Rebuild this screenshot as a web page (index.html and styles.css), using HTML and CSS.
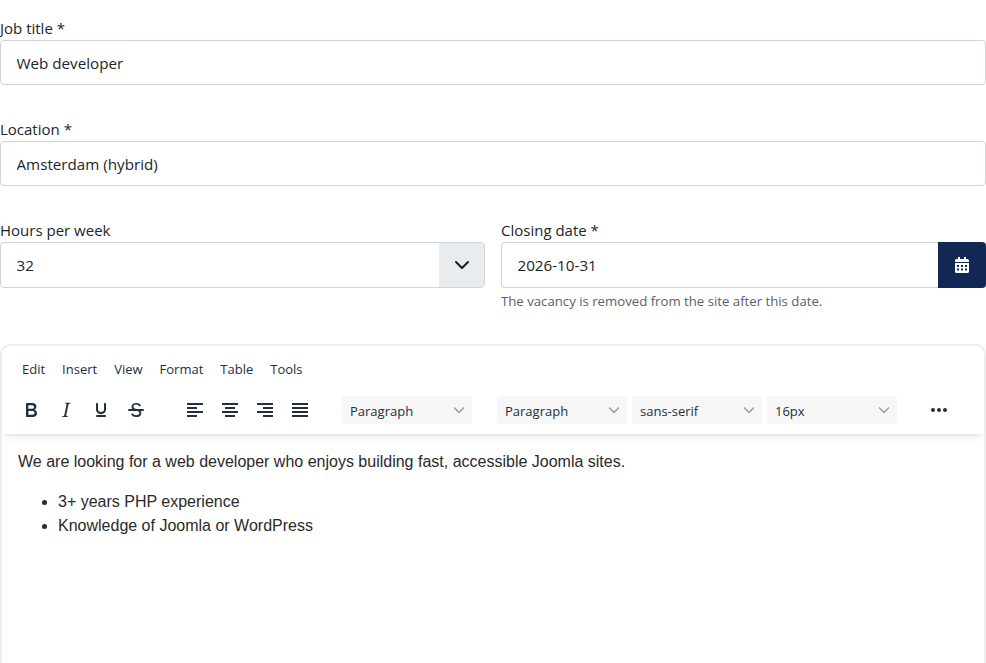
FILE: index.html
```html
<!DOCTYPE html>
<html lang="en">
<head>
    <meta charset="utf-8">
    <title>Vacancy</title>
    <link rel="stylesheet" href="styles.css">
</head>
<body>
    <form class="vacancy-form">
        <div class="field">
            <label class="field-label" for="jobTitle">Job title *</label>
            <input class="text-input" id="jobTitle" type="text" value="Web developer">
        </div>

        <div class="field">
            <label class="field-label" for="location">Location *</label>
            <input class="text-input" id="location" type="text" value="Amsterdam (hybrid)">
        </div>

        <div class="field-row">
            <div>
                <label class="field-label" for="hours">Hours per week</label>
                <div class="select-box" id="hours">
                    <span class="select-value">32</span>
                    <span class="select-arrow">
                        <svg width="16" height="16" viewBox="0 0 16 16"><path d="M2 5l6 6 6-6" fill="none" stroke="#1a1d20" stroke-width="2" stroke-linecap="round" stroke-linejoin="round"/></svg>
                    </span>
                </div>
            </div>
            <div>
                <label class="field-label" for="closing">Closing date *</label>
                <div class="date-group">
                    <input class="text-input date-input" id="closing" type="text" value="2026-10-31">
                    <button class="date-btn" type="button">
                        <svg width="14" height="16" viewBox="0 0 14 16"><path fill="#fff" fill-rule="evenodd" d="M3 0h2v2h4V0h2v2h1.5A1.5 1.5 0 0 1 14 3.500V5H0V3.500A1.500 1.500 0 0 1 1.500 2H3zM0 6h14v8.500a1.500 1.500 0 0 1-1.500 1.500h-11A1.500 1.500 0 0 1 0 14.500zM2 8v2h2V8zm4 0v2h2V8zm4 0v2h2V8zm-8 3.500v2h2v-2zm4 0v2h2v-2zm4 0v2h2v-2z"/></svg>
                    </button>
                </div>
                <p class="help-text">The vacancy is removed from the site after this date.</p>
            </div>
        </div>

        <div class="editor">
            <div class="editor-header">
                <div class="menubar">
                    <span>Edit</span>
                    <span>Insert</span>
                    <span>View</span>
                    <span>Format</span>
                    <span>Table</span>
                    <span>Tools</span>
                </div>
                <div class="toolbar">
                    <div class="tool-group">
                        <button class="tool-btn" type="button"><svg width="24" height="24" viewBox="0 0 24 24"><path d="M7.800 19c-.3 0-.5 0-.6-.2l-.2-.5V5.700c0-.2 0-.4.200-.5l.6-.2h5c1.500 0 2.700.3 3.500 1 .7.600 1.100 1.400 1.100 2.500a3 3 0 0 1-.6 1.900c-.4.600-1 1-1.600 1.200.4.100.9.300 1.300.6s.8.700 1 1.200c.4.400.5 1 .5 1.600 0 1.300-.4 2.300-1.300 3-.8.700-2.100 1-3.800 1H7.800zm5-8.300c.6 0 1.200-.1 1.600-.5.400-.3.600-.7.600-1.300 0-1.100-.8-1.700-2.300-1.700H9.300v3.500h3.400zm.5 6c.7 0 1.300-.1 1.700-.4.400-.4.600-.9.600-1.500s-.2-1-.7-1.400c-.4-.3-1-.4-2-.4H9.400v3.800h4z"/></svg></button>
                        <button class="tool-btn" type="button"><svg width="24" height="24" viewBox="0 0 24 24"><path d="M16.700 4.700l-.1.900h-.3c-.6 0-1 0-1.400.3-.3.300-.4.600-.5 1.100l-2.100 9.800v.6c0 .5.400.8 1.400.8h.2l-.2.800H8l.2-.8h.2c1.100 0 1.800-.5 2-1.500l2-9.800.1-.5c0-.6-.4-.8-1.400-.8h-.3l.2-.9h5.800z"/></svg></button>
                        <button class="tool-btn" type="button"><svg width="24" height="24" viewBox="0 0 24 24"><path d="M16 5c.6 0 1 .4 1 1v5.500a4 4 0 0 1-.4 1.800l-1 1.400a5.300 5.300 0 0 1-5.500 1 5 5 0 0 1-1.600-1c-.5-.4-.8-.9-1.100-1.400a4 4 0 0 1-.4-1.800V6c0-.6.400-1 1-1s1 .4 1 1v5.500c0 .3 0 .6.200 1l.6.700a3.300 3.300 0 0 0 2.200.8 3.400 3.400 0 0 0 2.200-.8c.3-.2.400-.5.600-.8l.2-.9V6c0-.6.400-1 1-1zM8 17h8c.6 0 1 .4 1 1s-.4 1-1 1H8a1 1 0 0 1 0-2z"/></svg></button>
                        <button class="tool-btn" type="button"><svg width="24" height="24" viewBox="0 0 24 24"><path d="M15.600 8.500c-.5-.7-1-1.100-1.300-1.300-.6-.4-1.300-.6-2-.6-2.700 0-2.800 1.700-2.800 2.100 0 1.600 1.800 2 3.200 2.300 4.400.9 4.600 2.800 4.600 3.900 0 1.400-.7 4.100-5 4.100A6.200 6.200 0 0 1 7 16.400l1.500-1.100c.4.600 1.600 2 3.700 2 1.600 0 2.500-.4 3-1.200.4-.8.3-2-.8-2.600-.7-.4-1.600-.7-2.900-1-1-.2-3.900-.8-3.900-3.600C7.600 6 10.300 5 12.400 5c2.900 0 4.200 1.600 4.700 2.400l-1.500 1.100z"/><path d="M5 11h14a1 1 0 0 1 0 2H5a1 1 0 0 1 0-2z"/></svg></button>
                    </div>
                    <div class="tool-group">
                        <button class="tool-btn" type="button"><svg width="24" height="24" viewBox="0 0 24 24"><path d="M4 5h16v2H4zM4 9h10v2H4zM4 13h16v2H4zM4 17h10v2H4z"/></svg></button>
                        <button class="tool-btn" type="button"><svg width="24" height="24" viewBox="0 0 24 24"><path d="M4 5h16v2H4zM7 9h10v2H7zM4 13h16v2H4zM7 17h10v2H7z"/></svg></button>
                        <button class="tool-btn" type="button"><svg width="24" height="24" viewBox="0 0 24 24"><path d="M4 5h16v2H4zM10 9h10v2H10zM4 13h16v2H4zM10 17h10v2H10z"/></svg></button>
                        <button class="tool-btn" type="button"><svg width="24" height="24" viewBox="0 0 24 24"><path d="M4 5h16v2H4zM4 9h16v2H4zM4 13h16v2H4zM4 17h16v2H4z"/></svg></button>
                    </div>
                    <div class="tool-group">
                        <button class="tool-select" type="button">Paragraph<svg width="10" height="10" viewBox="0 0 10 10"><path d="M0 2.500l5 5 5-5" class="chevron"/></svg></button>
                    </div>
                    <div class="tool-group tool-group-selects">
                        <button class="tool-select" type="button">Paragraph<svg width="10" height="10" viewBox="0 0 10 10"><path d="M0 2.500l5 5 5-5" class="chevron"/></svg></button>
                        <button class="tool-select" type="button">sans-serif<svg width="10" height="10" viewBox="0 0 10 10"><path d="M0 2.500l5 5 5-5" class="chevron"/></svg></button>
                        <button class="tool-select" type="button">16px<svg width="10" height="10" viewBox="0 0 10 10"><path d="M0 2.500l5 5 5-5" class="chevron"/></svg></button>
                    </div>
                    <div class="tool-group">
                        <button class="tool-btn" type="button"><svg width="24" height="24" viewBox="0 0 24 24"><circle cx="6" cy="12" r="2"/><circle cx="12" cy="12" r="2"/><circle cx="18" cy="12" r="2"/></svg></button>
                    </div>
                </div>
            </div>
            <div class="editor-body">
                <p>We are looking for a web developer who enjoys building fast, accessible Joomla sites.</p>
                <ul>
                    <li>3+ years PHP experience</li>
                    <li>Knowledge of Joomla or WordPress</li>
                </ul>
            </div>
        </div>
    </form>
</body>
</html>
```

FILE: styles.css
```css
body {
    font-family: 'Open Sans', sans-serif;
    font-size: 15px;
    color: #212529;
    background-color: #fff;
    margin: 0;
    overflow: hidden;
}

.vacancy-form {
    padding-top: 16px;
}

.field {
    margin-bottom: 32px;
}

.field-label {
    display: block;
    height: 24px;
    line-height: 24px;
}

.text-input {
    display: block;
    box-sizing: border-box;
    width: 100%;
    height: 45px;
    padding: 0 15.5px;
    font-family: inherit;
    font-size: 15.2px;
    color: #212529;
    background-color: #fff;
    border: 1px solid #ced4da;
    border-radius: 4px;
}

.field-row {
    display: grid;
    grid-template-columns: 1fr 1fr;
    gap: 16px;
}

.select-box {
    display: flex;
    height: 46px;
    box-sizing: border-box;
    border: 1px solid #ced4da;
    border-radius: 4px;
    overflow: hidden;
}

.select-value {
    flex: 1;
    padding-left: 15.5px;
    font-size: 15.2px;
    line-height: 44px;
}

.select-arrow {
    display: flex;
    align-items: center;
    justify-content: center;
    width: 45px;
    background-color: #e9ecef;
}

.date-group {
    display: flex;
}

.date-input {
    flex: 1;
    height: 46px;
    border-right: none;
    border-radius: 4px 0 0 4px;
}

.date-btn {
    display: flex;
    align-items: center;
    justify-content: center;
    width: 48px;
    height: 46px;
    padding: 0;
    background-color: #112855;
    border: none;
    border-radius: 0 4px 4px 0;
}

.help-text {
    margin: 4px 0 0;
    font-size: 13.2px;
    line-height: 19px;
    color: #5b6167;
}

.editor {
    height: 500px;
    margin-top: 33px;
    border: 2px solid #eee;
    border-radius: 10px;
}

.editor-header {
    box-shadow: 0 2px 2px -1px rgba(34, 47, 62, 0.1), 0 8px 8px -4px rgba(34, 47, 62, 0.07);
}

.menubar {
    display: flex;
    gap: 17px;
    height: 32px;
    padding: 9px 0 0 20px;
    font-size: 13px;
    line-height: 28px;
    color: #222f3e;
}

.toolbar {
    display: flex;
    gap: 25px;
    height: 47px;
    padding: 7px 0 0 12px;
    box-sizing: border-box;
}

.tool-group {
    display: flex;
    gap: 1px;
}

.tool-group-selects {
    gap: 5px;
}

.tool-btn {
    display: flex;
    align-items: center;
    justify-content: center;
    width: 34px;
    height: 28px;
    margin-top: 2px;
    padding: 0;
    background: none;
    border: none;
}

.tool-btn svg {
    fill: #222f3e;
}

.tool-select {
    display: flex;
    align-items: center;
    justify-content: space-between;
    width: 130px;
    height: 28px;
    margin-top: 2px;
    padding: 2px 8px 0;
    font-family: inherit;
    font-size: 13px;
    color: #222f3e;
    background-color: #f7f7f7;
    border: none;
    border-radius: 3px;
}

.tool-select svg {
    margin-top: -3px;
}

.chevron {
    fill: none;
    stroke: #999;
    stroke-width: 1.4;
}

.editor-body {
    padding: 16px;
    font-family: 'Liberation Sans', Arial, sans-serif;
    font-size: 16px;
    line-height: 24px;
    color: #2a2a2a;
}

.editor-body p {
    margin: 0 0 16px;
}

.editor-body ul {
    margin: 0;
    padding-left: 40px;
}
```
